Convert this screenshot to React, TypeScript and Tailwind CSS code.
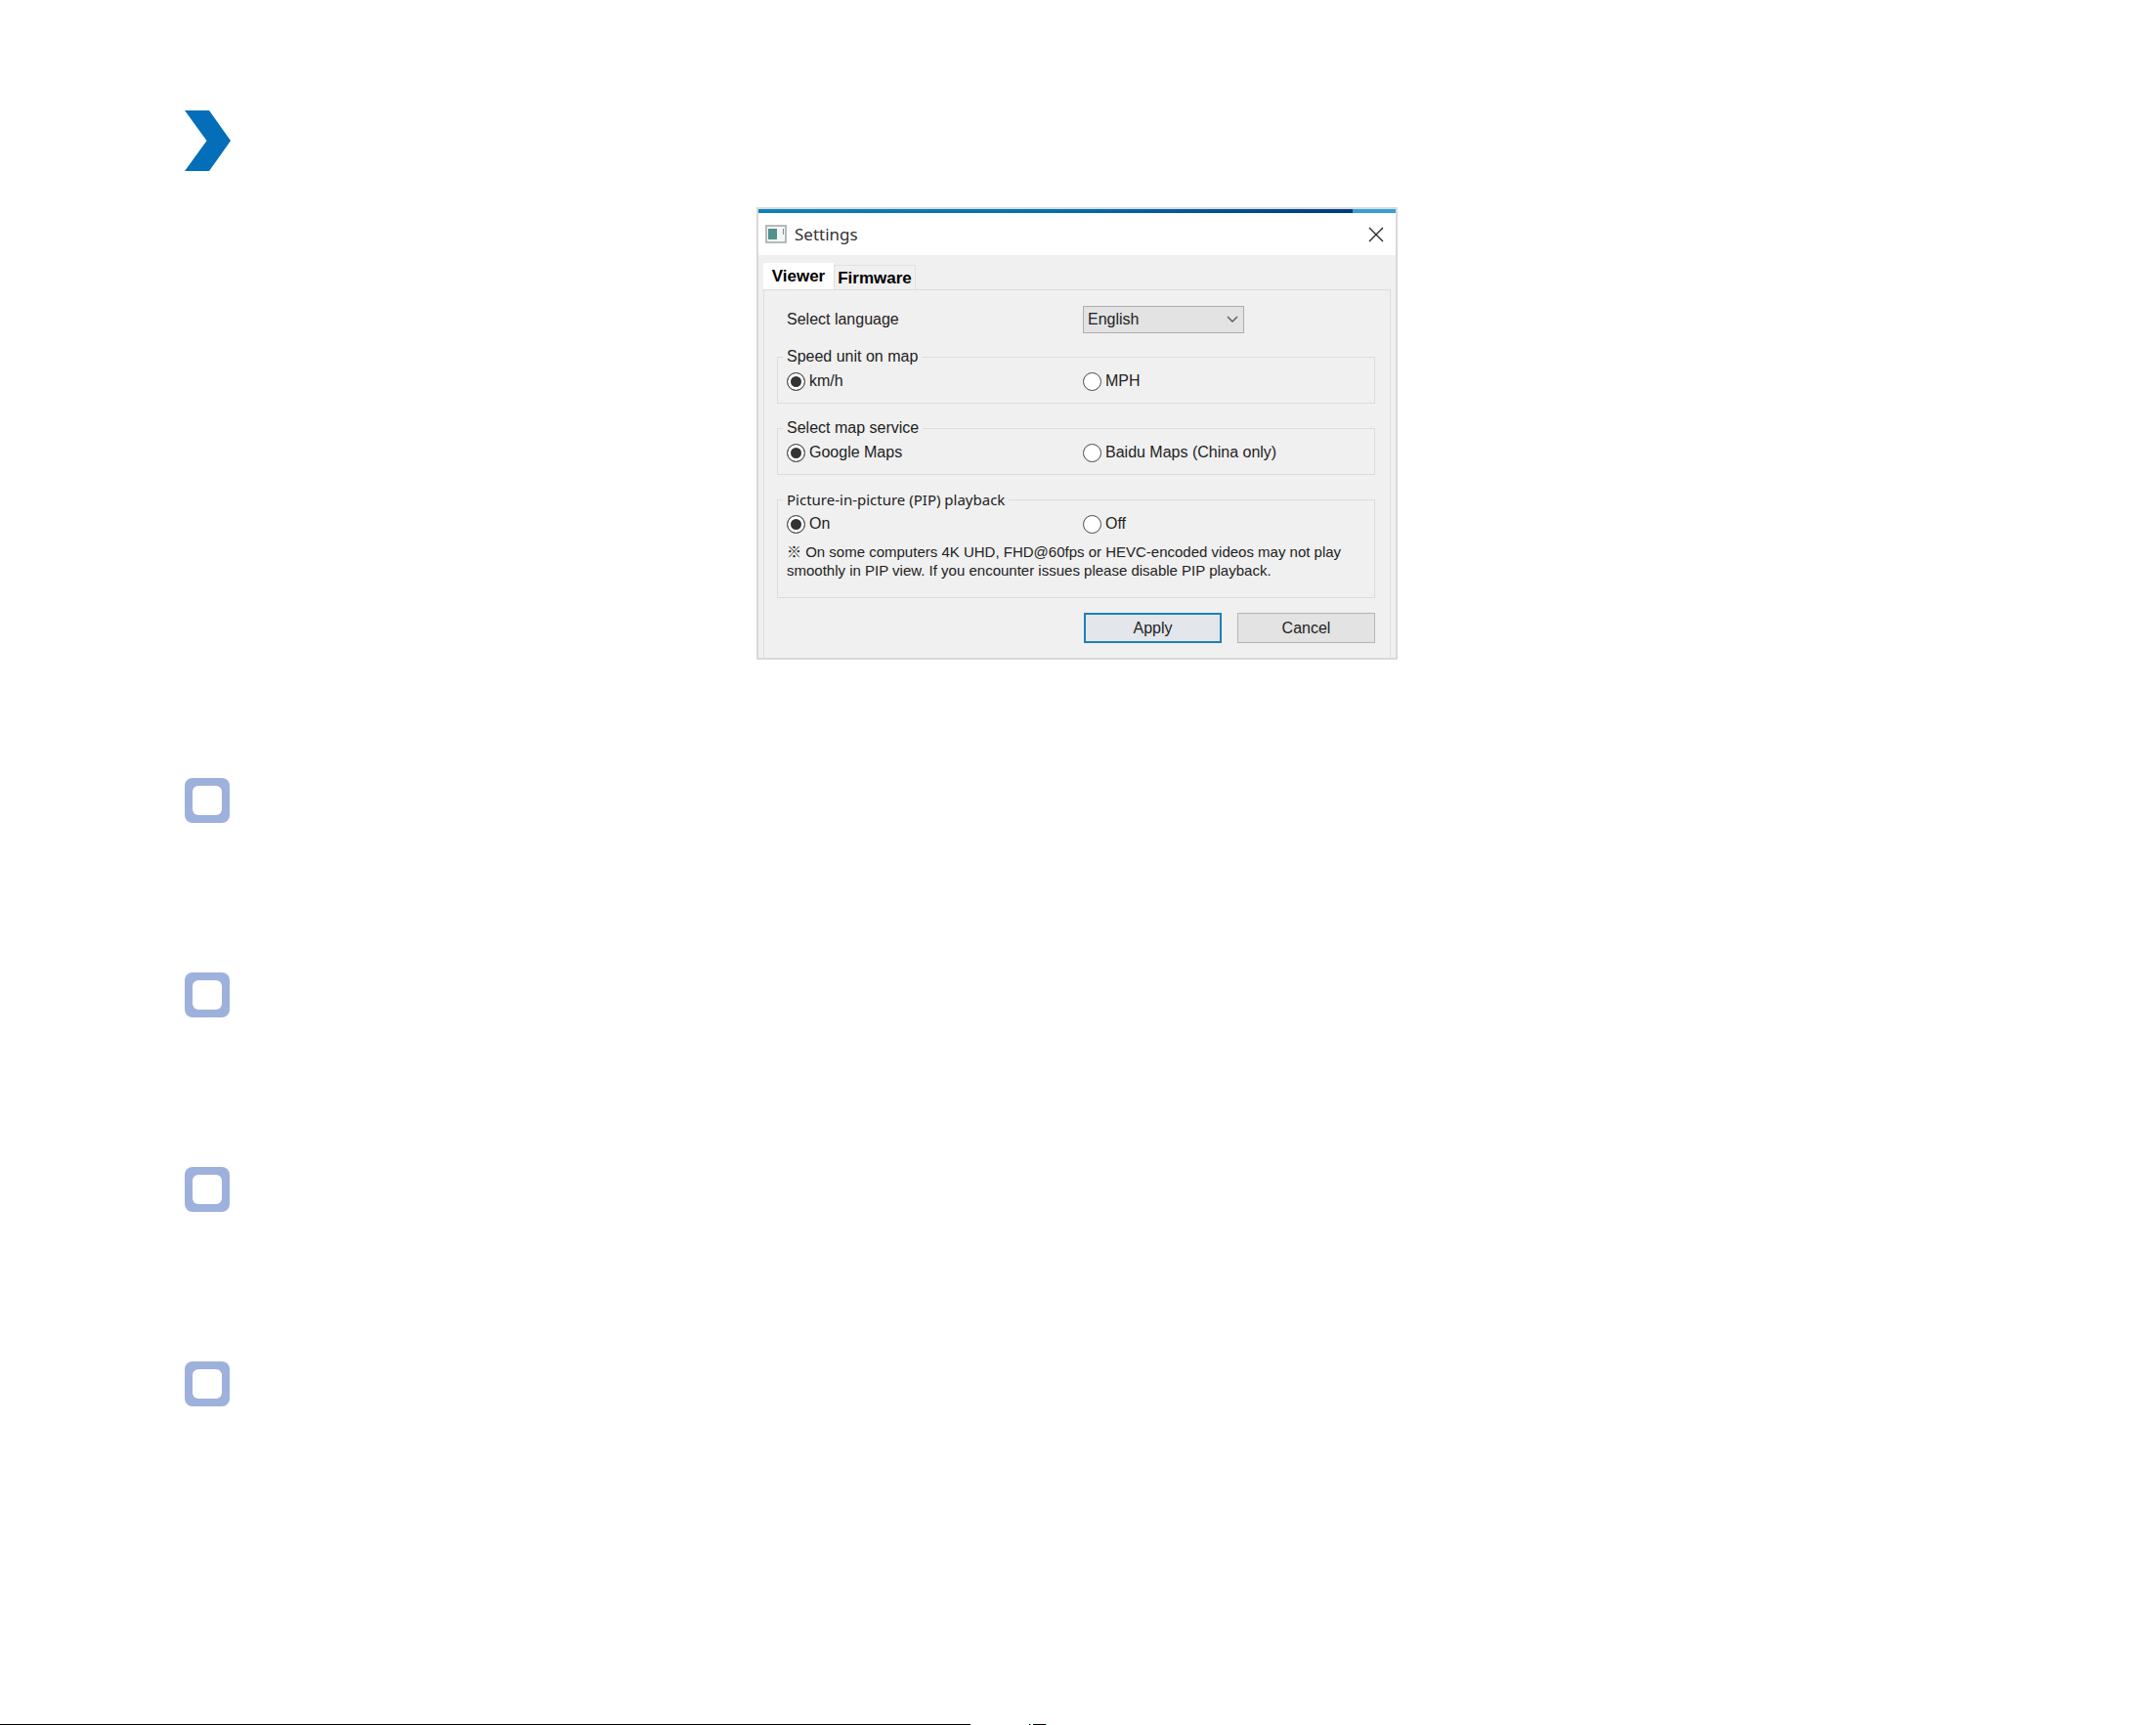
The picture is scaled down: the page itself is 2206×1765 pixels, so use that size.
import type { ReactNode } from "react";

function Radio({
  name,
  label,
  defaultChecked,
}: {
  name: string;
  label: string;
  defaultChecked?: boolean;
}) {
  return (
    <label className="flex items-center gap-1">
      <input
        type="radio"
        name={name}
        defaultChecked={defaultChecked}
        className="size-[19px] shrink-0 appearance-none rounded-full border border-[#4a4a4a] bg-white checked:bg-[#333333] checked:shadow-[inset_0_0_0_3px_#ffffff]"
      />
      {label}
    </label>
  );
}

function Group({
  title,
  legendClass = "leading-5",
  children,
}: {
  title: string;
  legendClass?: string;
  children: ReactNode;
}) {
  return (
    <fieldset className="border border-[#dcdcdc] px-[9px] pb-3">
      <legend className={`-ml-1 px-1 ${legendClass}`}>{title}</legend>
      <div className="mt-[5px]">{children}</div>
    </fieldset>
  );
}

function SettingsDialog() {
  return (
    <section
      role="dialog"
      aria-labelledby="dialog-title"
      className="mx-auto w-[656px] max-w-full border-2 border-[#d9d9d9] bg-[#f0f0f0] text-base leading-5"
    >
      <div className="flex h-1">
        <div className="flex-1 bg-linear-to-r from-[#0a82bd] via-[#0070ae] to-[#003a80]" />
        <div className="w-11 bg-[#33a0d6]" />
      </div>
      <header className="flex h-[43px] items-center bg-white pr-3 pl-[7px]">
        <svg width="22" height="19" viewBox="0 0 22 19" aria-hidden="true">
          <rect x="1" y="1" width="20" height="17" fill="#f4f6f6" stroke="#b4babc" strokeWidth="2" />
          <rect x="3" y="4" width="9" height="11" fill="#4f938c" />
          <path d="M18.500 4v6" stroke="#8a8a8a" />
        </svg>
        <h2
          id="dialog-title"
          className="ml-2 flex-1 font-['Noto_Sans',sans-serif] text-[17px] text-[#333333]"
        >
          Settings
        </h2>
        <button type="button" aria-label="Close">
          <svg width="16" height="16" viewBox="0 0 16 16" aria-hidden="true">
            <path d="M1 1l14 14M15 1L1 15" stroke="#222222" strokeWidth="1.3" />
          </svg>
        </button>
      </header>

      <div className="mx-[5px] mt-2">
        <div role="tablist" className="flex items-end text-[17px] font-bold text-black">
          <button
            type="button"
            role="tab"
            aria-selected="true"
            className="h-[27px] w-[72px] bg-white"
          >
            Viewer
          </button>
          <button
            type="button"
            role="tab"
            aria-selected="false"
            className="h-[25px] w-[84px] border border-b-0 border-[#e2e2e2] pt-[2px]"
          >
            Firmware
          </button>
        </div>
        <div
          role="tabpanel"
          className="border border-b-0 border-[#dcdcdc] pr-[15px] pb-[15px] pl-[13px] text-[#222222]"
        >
          <div className="mt-4 mb-[14px] flex items-center pl-[10px]">
            <label htmlFor="language" className="w-[303px]">
              Select language
            </label>
            <div className="relative">
              <select
                id="language"
                className="block h-7 w-[165px] appearance-none border border-[#adadad] bg-[#e3e3e3] pl-1"
              >
                <option>English</option>
              </select>
              <svg
                width="12"
                height="8"
                viewBox="0 0 12 8"
                fill="none"
                aria-hidden="true"
                className="pointer-events-none absolute top-[10px] right-[6px]"
              >
                <path d="M1 1l5 5 5-5" stroke="#555555" strokeWidth="1.3" />
              </svg>
            </div>
          </div>

          <div className="flex flex-col gap-[15px]">
            <Group title="Speed unit on map">
              <div className="grid grid-cols-[303px_1fr]">
                <Radio name="speed" label="km/h" defaultChecked />
                <Radio name="speed" label="MPH" />
              </div>
            </Group>
            <Group title="Select map service">
              <div className="grid grid-cols-[303px_1fr]">
                <Radio name="map" label="Google Maps" defaultChecked />
                <Radio name="map" label="Baidu Maps (China only)" />
              </div>
            </Group>
            <Group
              title="Picture-in-picture (PIP) playback"
              legendClass="font-['Noto_Sans',sans-serif] text-[15px] leading-5"
            >
              <div className="grid grid-cols-[303px_1fr]">
                <Radio name="pip" label="On" defaultChecked />
                <Radio name="pip" label="Off" />
              </div>
              <p className="mt-[9px] mb-[6px] text-[15px] leading-[19px]">
                ※ On some computers 4K UHD, FHD@60fps or HEVC-encoded videos may not play
                <br />
                smoothly in PIP view. If you encounter issues please disable PIP playback.
              </p>
            </Group>
          </div>

          <div className="mt-[15px] flex justify-end gap-4">
            <button
              type="button"
              className="h-[31px] w-[141px] border-2 border-[#1f7fb5] bg-[#e3e6ea]"
            >
              Apply
            </button>
            <button
              type="button"
              className="h-[31px] w-[141px] border border-[#b5b5b5] bg-[#e3e3e3]"
            >
              Cancel
            </button>
          </div>
        </div>
      </div>
    </section>
  );
}

export default function App() {
  return (
    <div className="flex min-h-screen flex-col bg-white font-['Liberation_Sans','Noto_Sans_CJK_KR',sans-serif]">
      <main className="flex-1 pt-[113px]">
        <svg width="47" height="62" viewBox="0 0 47 62" className="ml-[189px]" aria-hidden="true">
          <path d="M0 0h25l22 31-22 31H0l22.500-31z" fill="#046eb8" />
        </svg>
        <div className="mt-[37px] pr-0.5">
          <SettingsDialog />
        </div>
        <div className="mt-[121px] ml-[189px] flex flex-col items-start gap-[153px]">
          {[1, 2, 3, 4].map((n) => (
            <label key={n} className="rounded-lg bg-[#9eb1dc] p-2">
              <input
                type="checkbox"
                aria-label={`Item ${n}`}
                className="block size-[30px] appearance-none rounded-md bg-white"
              />
            </label>
          ))}
        </div>
      </main>
      <footer className="flex h-px">
        <div className="w-[45%] bg-black" />
        <div className="ml-[60px] w-px bg-black" />
        <div className="w-px bg-[#7fe0e0]" />
        <div className="ml-[2px] w-[13px] bg-black" />
        <div className="w-px bg-[#7fe0e0]" />
      </footer>
    </div>
  );
}
